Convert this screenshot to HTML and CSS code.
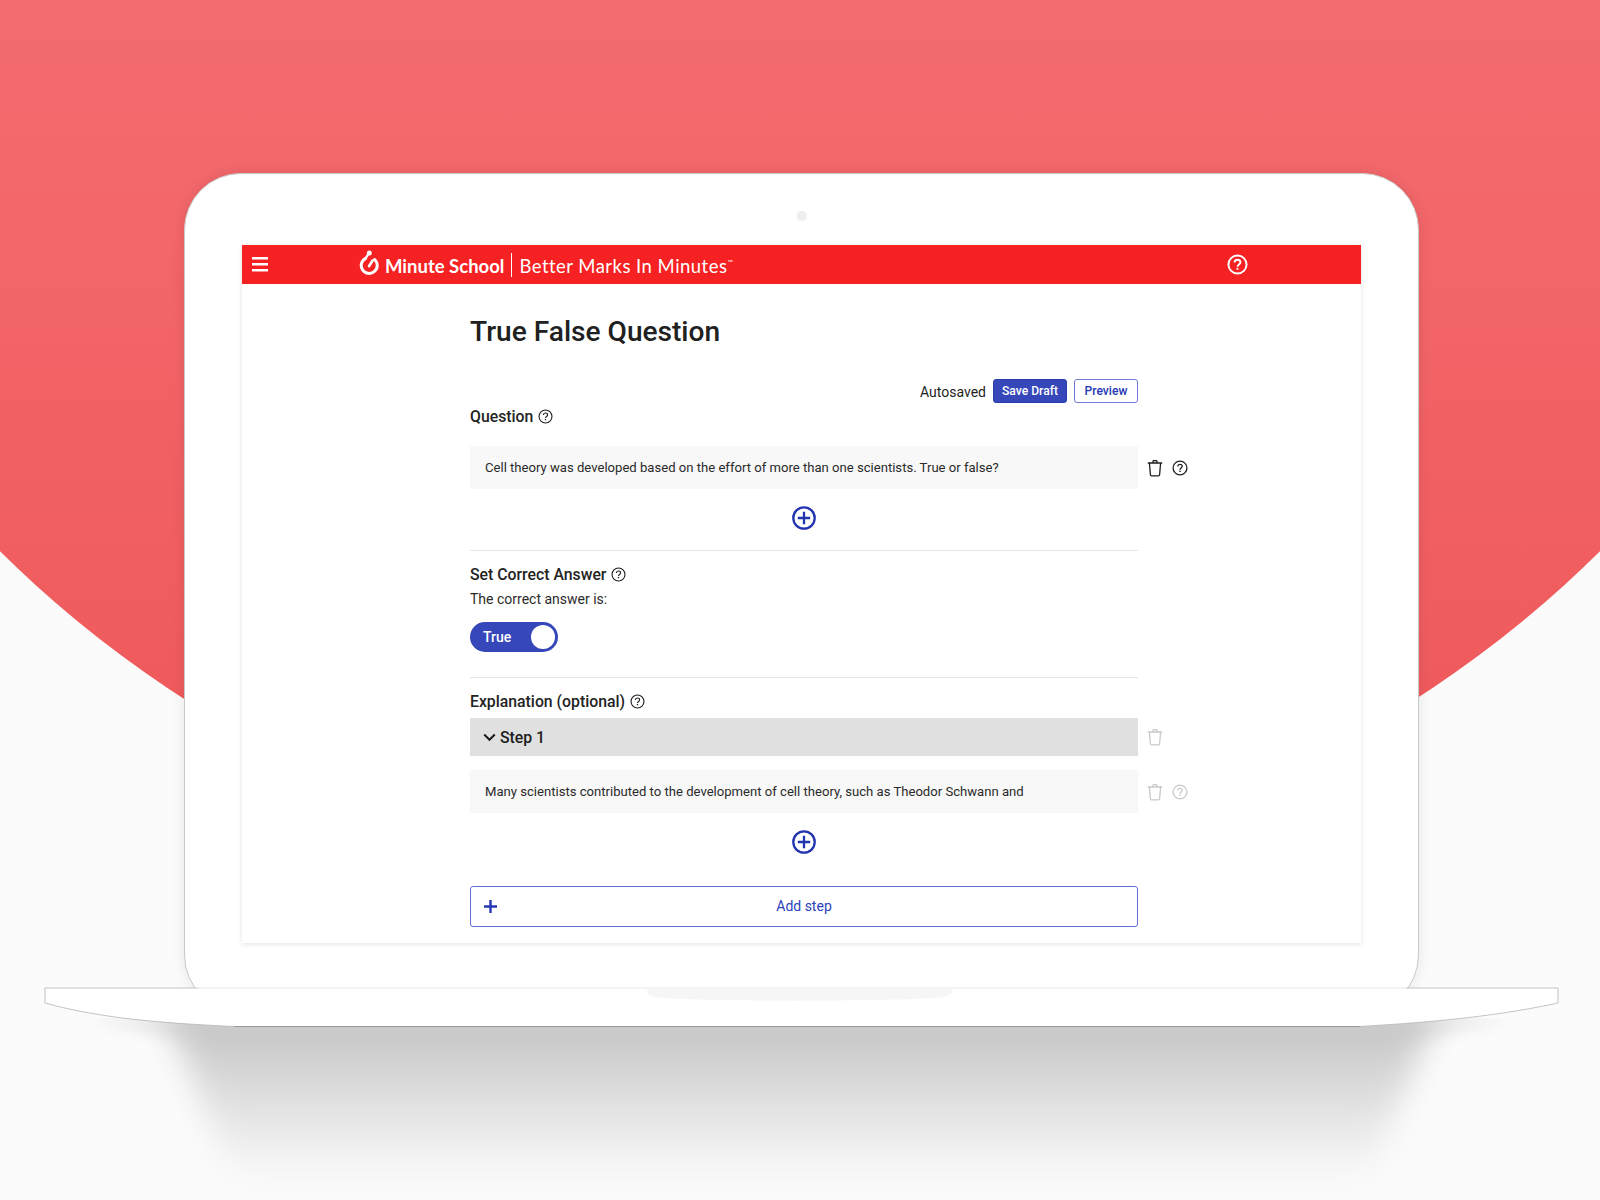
FILE: index.html
```html
<!DOCTYPE html>
<html lang="en">
<head>
<meta charset="utf-8">
<title>True False Question</title>
<link rel="stylesheet" href="styles.css">
</head>
<body>
<svg class="sprite" width="0" height="0" aria-hidden="true">
  <symbol id="help" viewBox="0 0 16 16">
    <circle class="help-ring" cx="8" cy="8" r="6.9"/>
    <path class="help-mark" d="M5.800 6.400C5.800 5.100 6.800 4.300 8 4.300s2.200.8 2.200 2c0 1.700-2.200 1.600-2.200 3.400"/>
    <rect x="7.300" y="10.600" width="1.400" height="1.400" fill="currentColor"/>
  </symbol>
  <symbol id="trash" viewBox="0 0 16 18">
    <path d="M.8 4h14.400M2.400 4l1 11.700c.05.8.4 1.200 1.200 1.200h6.800c.8 0 1.150-.4 1.200-1.200L13.600 4M5.800 4l.5-2.400h3.400l.5 2.400" fill="none" stroke="currentColor" stroke-width="1.300" stroke-linejoin="round"/>
  </symbol>
  <symbol id="plus-circle" viewBox="0 0 24 24">
    <circle cx="12" cy="12" r="10.700" fill="none" stroke="currentColor" stroke-width="2.300"/>
    <path d="M12 5.800v12.400M5.800 12h12.400" fill="none" stroke="currentColor" stroke-width="2.300"/>
  </symbol>
</svg>

<svg class="backdrop" width="1600" height="900" viewBox="0 0 1600 900" aria-hidden="true">
  <defs>
    <linearGradient id="coral" gradientUnits="userSpaceOnUse" x1="0" y1="0" x2="0" y2="720">
      <stop offset="0" stop-color="#f46c70"/>
      <stop offset="1" stop-color="#ef5a5c"/>
    </linearGradient>
  </defs>
  <circle cx="800" cy="-258" r="1138" fill="url(#coral)"/>
</svg>

<svg class="floor-shadow" width="1600" height="182" viewBox="0 0 1600 182" aria-hidden="true">
  <defs>
    <linearGradient id="fade" x1="0" y1="0" x2="0" y2="1">
      <stop offset="0" stop-color="#bfbfbf"/>
      <stop offset="0.5" stop-color="#dedede"/>
      <stop offset="1" stop-color="#fbfbfb"/>
    </linearGradient>
    <filter id="soft" x="-10%" y="-20%" width="120%" height="140%">
      <feGaussianBlur stdDeviation="16"/>
    </filter>
    <filter id="soft-wide" x="-10%" y="-50%" width="120%" height="200%">
      <feGaussianBlur stdDeviation="8"/>
    </filter>
  </defs>
  <path d="M90 0H1510L1400 24H200Z" fill="#e2e2e2" filter="url(#soft-wide)"/>
  <path d="M165 -10H1437L1367 165H235Z" fill="url(#fade)" filter="url(#soft)"/>
</svg>

<main class="laptop">
  <section class="lid">
    <div class="camera"></div>
    <div class="screen">
      <header class="nav">
        <svg class="burger" width="16" height="15" viewBox="0 0 16 15" aria-hidden="true"><path d="M0 0h16v2.600H0zM0 6h16v2.600H0zM0 12h16v2.600H0z" fill="#fff"/></svg>
        <div class="brand">
          <svg class="logo" width="20" height="26" viewBox="0 0 20 26" aria-hidden="true">
            <path d="M6.600 8.300A8 8 0 1 0 15.600 9.500" fill="none" stroke="#fff" stroke-width="3" stroke-linecap="round"/>
            <path d="M6.600 8.300L9.600 3.600" fill="none" stroke="#fff" stroke-width="2.200" stroke-linecap="round"/>
            <circle cx="10.300" cy="3" r="2.500" fill="#fff"/>
            <path d="M10 16.200L13.600 10.500" fill="none" stroke="#fff" stroke-width="2.600" stroke-linecap="round"/>
          </svg>
          <span class="brand-name">Minute School</span>
          <span class="brand-bar"></span>
          <span class="brand-tag">Better Marks In Minutes<sup class="tm">™</sup></span>
        </div>
        <svg class="nav-help"><use href="#help"/></svg>
      </header>

      <div class="page">
        <h1 class="title">True False Question</h1>

        <div class="toolbar">
          <span class="autosaved">Autosaved</span>
          <button class="btn btn-solid">Save Draft</button>
          <button class="btn btn-line">Preview</button>
        </div>

        <h2 class="label label-question">Question <svg class="help"><use href="#help"/></svg></h2>

        <div class="row row-question">
          <div class="field">Cell theory was developed based on the effort of more than one scientists. True or false?</div>
          <svg class="trash"><use href="#trash"/></svg>
          <svg class="help-lg"><use href="#help"/></svg>
        </div>

        <div class="add add-question"><svg class="plus"><use href="#plus-circle"/></svg></div>
        <hr class="rule rule-first">

        <h2 class="label label-answer">Set Correct Answer <svg class="help"><use href="#help"/></svg></h2>
        <p class="hint">The correct answer is:</p>
        <div class="toggle"><span>True</span><i class="knob"></i></div>
        <hr class="rule rule-second">

        <h2 class="label label-expl">Explanation (optional) <svg class="help"><use href="#help"/></svg></h2>

        <div class="row row-step">
          <div class="step">
            <svg class="chev" width="13" height="9" viewBox="0 0 13 9" aria-hidden="true"><path d="M1.200 1.500l5.300 5.300 5.300-5.300" fill="none" stroke="#1c1c1c" stroke-width="2"/></svg>
            Step 1
          </div>
          <svg class="trash faded"><use href="#trash"/></svg>
        </div>

        <div class="row row-expl">
          <div class="field">Many scientists contributed to the development of cell theory, such as Theodor Schwann and</div>
          <svg class="trash faded"><use href="#trash"/></svg>
          <svg class="help-lg faded"><use href="#help"/></svg>
        </div>

        <div class="add add-expl"><svg class="plus"><use href="#plus-circle"/></svg></div>

        <button class="add-step">
          <svg class="add-step-plus" width="13" height="13" viewBox="0 0 13 13" aria-hidden="true"><path d="M6.500 0v13M0 6.500h13" stroke="#2638b4" stroke-width="2.400"/></svg>
          <span>Add step</span>
        </button>
      </div>
    </div>
  </section>

  <section class="base">
    <svg class="base-shape" width="1515" height="42" viewBox="0 0 1515 42" aria-hidden="true">
      <path d="M1 1H1514V16C1440 32 1370 36 1316 39.500H190C130 36.500 70 33 1 16Z" fill="#fff"/>
      <path d="M154 1H1V16C62 33 130 36.500 190 39.500" fill="none" stroke="#b5b5b5" stroke-width=".8"/>
      <path d="M1362 1H1514V16C1440 32 1370 36 1316 39.500" fill="none" stroke="#b5b5b5" stroke-width=".8"/>
      <path d="M190 39.500H1316" stroke="#999" stroke-width="1"/>
      <path d="M154 1H1362" stroke="#efefef" stroke-width="1.400"/>
      <path d="M603 1.600H909C909 8 904 10 890 11C830 14.500 680 14.500 620 11C607 10 603 8 603 1.600Z" fill="#f6f6f6"/>
    </svg>
  </section>
</main>
</body>
</html>
```
FILE: styles.css
```css
html, body {
  margin: 0;
  padding: 0;
}

body {
  position: relative;
  width: 1600px;
  height: 1200px;
  overflow: hidden;
  background: #fbfbfb;
  color: #1e1e1e;
  font-family: Roboto, "Liberation Sans", sans-serif;
}

.sprite {
  position: absolute;
}

.backdrop {
  position: absolute;
  left: 0;
  top: 0;
}

.floor-shadow {
  position: absolute;
  left: 0;
  top: 1018px;
}

.help-ring,
.help-mark {
  fill: none;
  stroke: currentColor;
  stroke-width: var(--help-stroke, 1.200);
}

.laptop {
  position: relative;
  display: flex;
  flex-direction: column;
  align-items: center;
  padding: 173px 0 0 3px;
}

.lid {
  box-sizing: border-box;
  width: 1235px;
  height: 839px;
  padding-left: 57px;
  background: #fff;
  border: 1px solid #c9c9c9;
  border-radius: 57px;
  box-shadow: 0 0 14px rgba(0, 0, 0, 0.09);
}

.camera {
  width: 10px;
  height: 10px;
  margin: 37px 0 24px 555px;
  border-radius: 50%;
  background: #eeeeee;
}

.screen {
  width: 1119px;
  height: 698px;
  background: #fff;
  box-shadow: 0 1px 5px rgba(0, 0, 0, 0.12);
}

.nav {
  display: flex;
  align-items: center;
  height: 39px;
  padding: 0 0 0 9px;
  background: #f62122;
  color: #fff;
}

.burger {
  flex: none;
  margin-left: 1px;
}

.brand {
  display: flex;
  align-items: center;
  margin-left: 91px;
  padding-top: 2px;
  color: #fff;
  font-family: Lato, "Open Sans", sans-serif;
  font-size: 18.500px;
  white-space: nowrap;
}

.logo {
  margin: -6px 0 0 0;
}

.brand-name {
  margin-left: 6px;
  font-weight: 700;
}

.brand-bar {
  width: 1px;
  height: 24px;
  margin: -2px 7px 0 7px;
  background: #fff;
}

.brand-tag {
  font-weight: 400;
  letter-spacing: 0.47px;
}

.tm {
  font-size: 7px;
  line-height: 0;
  vertical-align: 8px;
}

.nav-help {
  --help-stroke: 1.500;
  width: 21px;
  height: 21px;
  margin-left: auto;
  margin-right: 113px;
  color: #fff;
}

.page {
  width: 768px;
  padding-left: 228px;
}

.title {
  margin: 32px 0 0;
  font-size: 28.100px;
  line-height: 31px;
  font-weight: 500;
  color: #202020;
}

.toolbar {
  display: flex;
  align-items: center;
  justify-content: flex-end;
  width: 668px;
  margin-top: 32px;
  height: 23px;
}

.autosaved {
  margin: 2px 7px 0 0;
  font-size: 14px;
}

.btn {
  box-sizing: border-box;
  height: 24px;
  border-radius: 3px;
  font-family: inherit;
  font-size: 12.100px;
  font-weight: 500;
  padding: 0;
}

.btn-solid {
  width: 74px;
  margin-right: 7px;
  background: #3647b9;
  border: 1px solid #2b3daa;
  color: #fff;
}

.btn-line {
  width: 64px;
  background: #fff;
  border: 1.300px solid #6f7cdc;
  color: #2638b4;
}

.label {
  display: flex;
  align-items: center;
  gap: 5px;
  margin: 0;
  height: 24px;
  font-size: 15.800px;
  font-weight: 500;
  color: #232323;
}

.label-question {
  margin-top: 2px;
}

.label-answer {
  margin-top: 11px;
}

.label-expl {
  margin-top: 11px;
}

.help {
  width: 15px;
  height: 15px;
  color: #222;
}

.row {
  display: flex;
  align-items: center;
}

.row-question {
  margin-top: 18px;
}

.row-step {
  margin-top: 5px;
}

.row-expl {
  margin-top: 14px;
}

.field {
  box-sizing: border-box;
  width: 668px;
  height: 43px;
  padding: 0 15px;
  background: #f8f8f8;
  font-size: 13.100px;
  line-height: 44px;
  color: #2a2a2a;
}

.trash {
  flex: none;
  width: 16px;
  height: 18px;
  margin-left: 9px;
  color: #1e1e1e;
}

.help-lg {
  --help-stroke: 1.300;
  flex: none;
  width: 16px;
  height: 16px;
  margin-left: 9px;
  color: #1e1e1e;
}

.faded {
  color: #c9c9c9;
}

.add {
  display: flex;
  justify-content: center;
  width: 668px;
}

.add-question {
  margin-top: 17px;
}

.add-expl {
  margin-top: 17px;
}

.plus {
  width: 24px;
  height: 24px;
  color: #2334b0;
}

.rule {
  width: 668px;
  height: 1px;
  margin: 0;
  border: 0;
  background: #e6e6e6;
}

.rule-first {
  margin-top: 20px;
}

.rule-second {
  margin-top: 25px;
}

.hint {
  margin: 1px 0 0;
  font-size: 14px;
  line-height: 25px;
  color: #2b2b2b;
}

.toggle {
  box-sizing: border-box;
  display: flex;
  align-items: center;
  justify-content: space-between;
  width: 88px;
  height: 30px;
  margin-top: 10px;
  padding: 0 3px 0 13px;
  border-radius: 15px;
  background: #3647b9;
  color: #fff;
  font-size: 14px;
  font-weight: 500;
}

.knob {
  width: 24px;
  height: 24px;
  border-radius: 50%;
  background: #fff;
}

.step {
  box-sizing: border-box;
  display: flex;
  align-items: center;
  gap: 4px;
  width: 668px;
  height: 38px;
  padding-left: 13px;
  background: #e0e0e0;
  font-size: 15.800px;
  font-weight: 500;
  color: #1c1c1c;
}

.add-step {
  box-sizing: border-box;
  display: grid;
  grid-template-columns: 1fr auto 1fr;
  align-items: center;
  width: 668px;
  height: 41px;
  margin-top: 32px;
  padding: 0 13px 2px;
  background: #fff;
  border: 1.500px solid #5f6fd3;
  border-radius: 3px;
  font-family: inherit;
  font-size: 14px;
  color: #2c3fbe;
}

.add-step-plus {
  margin-top: 2px;
}

.base {
  position: relative;
  margin-top: -25px;
  line-height: 0;
}

.base-shape {
  display: block;
}
```
